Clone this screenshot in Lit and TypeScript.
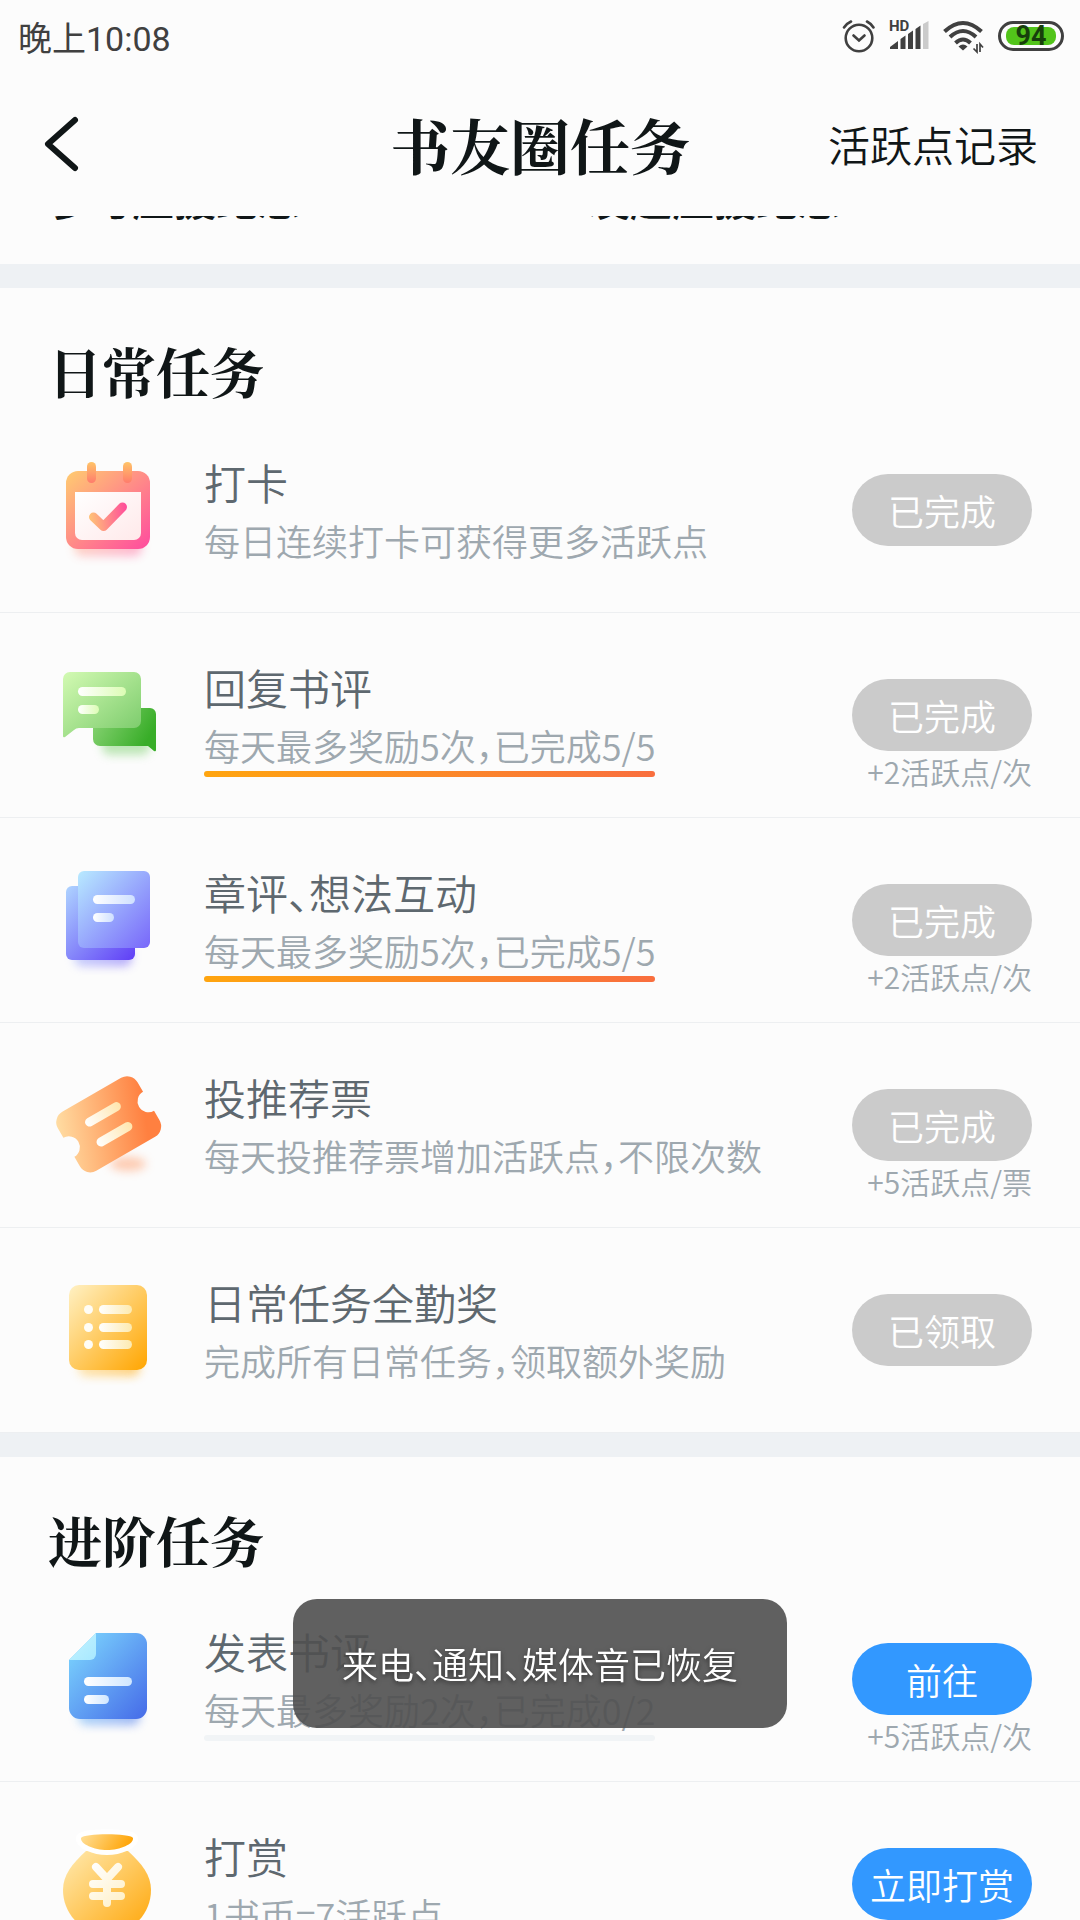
import { LitElement, html, svg, css, nothing } from "lit";
import { customElement, property } from "lit/decorators.js";

type IconName = "calendar" | "chat" | "notes" | "ticket" | "list" | "doc" | "bag";

interface Task {
  icon: IconName;
  title: string;
  desc: string;
  action: string;
  note?: string;
  progress?: number;
  done: boolean;
}

interface Section {
  heading: string;
  tasks: Task[];
}

const SECTIONS: Section[] = [
  {
    heading: "日常任务",
    tasks: [
      { icon: "calendar", title: "打卡", desc: "每日连续打卡可获得更多活跃点", action: "已完成", done: true },
      { icon: "chat", title: "回复书评", desc: "每天最多奖励5次，已完成5/5", action: "已完成", note: "+2活跃点/次", progress: 100, done: true },
      { icon: "notes", title: "章评、想法互动", desc: "每天最多奖励5次，已完成5/5", action: "已完成", note: "+2活跃点/次", progress: 100, done: true },
      { icon: "ticket", title: "投推荐票", desc: "每天投推荐票增加活跃点，不限次数", action: "已完成", note: "+5活跃点/票", done: true },
      { icon: "list", title: "日常任务全勤奖", desc: "完成所有日常任务，领取额外奖励", action: "已领取", done: true },
    ],
  },
  {
    heading: "进阶任务",
    tasks: [
      { icon: "doc", title: "发表书评", desc: "每天最多奖励2次，已完成0/2", action: "前往", note: "+5活跃点/次", progress: 0, done: false },
      { icon: "bag", title: "打赏", desc: "1书币=7活跃点", action: "立即打赏", done: false },
    ],
  },
];

const gradient = (id: string, from: string, to: string, x2 = 1, y2 = 1) => svg`
  <linearGradient id=${id} x1="0" y1="0" x2=${x2} y2=${y2}>
    <stop offset="0" stop-color=${from} />
    <stop offset="1" stop-color=${to} />
  </linearGradient>`;

const softBlur = svg`
  <filter id="blur" x="-50%" y="-100%" width="200%" height="300%">
    <feGaussianBlur stdDeviation="5" />
  </filter>`;

const ICONS = {
  calendar: svg`
    <defs>
      ${softBlur}
      ${gradient("body", "#ffcc70", "#ff4a9f")}
      ${gradient("tab", "#ffc468", "#ff7c6c", 0)}
      ${gradient("paper", "#ffffff", "#ffe9ea")}
      <linearGradient id="tick" gradientUnits="userSpaceOnUse" x1="36" y1="60" x2="72" y2="56">
        <stop offset="0" stop-color="#ffc078" /><stop offset="1" stop-color="#ff4f9a" />
      </linearGradient>
    </defs>
    <rect x="20" y="80" width="68" height="22" rx="8" fill="url(#body)" opacity="0.45" filter="url(#blur)" />
    <rect x="12" y="17" width="84" height="78" rx="12" fill="url(#body)" />
    <path d="M21 38H87V79a7 7 0 0 1-7 7H28a7 7 0 0 1-7-7Z" fill="url(#paper)" />
    <rect x="33" y="8" width="9" height="21" rx="4.5" fill="url(#tab)" />
    <rect x="69" y="8" width="9" height="21" rx="4.5" fill="url(#tab)" />
    <path d="M39.500 63L49.500 72.500L68.500 53" fill="none" stroke="url(#tick)" stroke-width="9" stroke-linecap="round" stroke-linejoin="round" />`,
  chat: svg`
    <defs>
      ${softBlur}
      ${gradient("back", "#8fd67a", "#38ad28", 1, 0.4)}
      ${gradient("front", "#d3fab3", "#77c968")}
      ${gradient("line", "#ffffff", "#dcfcb4", 1, 0)}
    </defs>
    <rect x="48" y="76" width="48" height="20" rx="8" fill="#7ed070" opacity="0.5" filter="url(#blur)" />
    <path d="M39 49H96a6 6 0 0 1 6 6V91q0 2-2 1L94 87H46a7 7 0 0 1-7-7Z" fill="url(#back)" />
    <path d="M9 20a7 7 0 0 1 7-7H80a7 7 0 0 1 7 7V62a7 7 0 0 1-7 7H25q-3 0-5 2L11 78q-2 1-2-1Z" fill="url(#front)" />
    <rect x="24" y="28" width="48" height="9" rx="4.500" fill="url(#line)" />
    <rect x="24" y="46" width="21" height="9" rx="4.500" fill="url(#line)" />`,
  notes: svg`
    <defs>
      ${softBlur}
      ${gradient("back", "#aed4ff", "#5f3df6")}
      ${gradient("front", "#b8eaff", "#7867fa")}
      ${gradient("line", "#ffffff", "#cfe0ff", 1, 0)}
    </defs>
    <rect x="20" y="82" width="58" height="20" rx="8" fill="url(#back)" opacity="0.5" filter="url(#blur)" />
    <rect x="12" y="22" width="69" height="74" rx="6" fill="url(#back)" />
    <rect x="24" y="7" width="72" height="77" rx="6" fill="url(#front)" />
    <rect x="39" y="31" width="42" height="9" rx="4.500" fill="url(#line)" />
    <rect x="39" y="49" width="21" height="9" rx="4.500" fill="url(#line)" />`,
  ticket: svg`
    <defs>
      ${softBlur}
      ${gradient("body", "#ffe0a6", "#ff8040", 1, 0.3)}
      ${gradient("line", "#ffffff", "#ffe6ae", 1, 0)}
    </defs>
    <ellipse cx="74" cy="95" rx="18" ry="7" fill="#ff9a66" opacity="0.5" filter="url(#blur)" />
    <g transform="translate(54.700 55.300) rotate(-30)">
      <path d="M-34-34H34A12 12 0 0 1 46-22V-11A11 11 0 0 0 46 11V22A12 12 0 0 1 34 34H-34A12 12 0 0 1-46 22V11A11 11 0 0 0-46-11V-22A12 12 0 0 1-34-34Z" fill="url(#body)" />
      <rect x="-20" y="-16" width="40" height="9" rx="4.500" fill="url(#line)" />
      <rect x="-20" y="7" width="40" height="9" rx="4.500" fill="url(#line)" />
    </g>`,
  list: svg`
    <defs>
      ${softBlur}
      ${gradient("body", "#fff1c4", "#ffa500")}
      ${gradient("line", "#ffffff", "#fdeab0", 1, 0)}
    </defs>
    <rect x="24" y="80" width="62" height="22" rx="8" fill="url(#body)" opacity="0.6" filter="url(#blur)" />
    <rect x="15" y="11" width="78" height="85" rx="10" fill="url(#body)" />
    ${[31, 49, 66].map(
      (y) => svg`
        <circle cx="34.500" cy=${y + 4.5} r="4.500" fill="#fffdf6" />
        <rect x="45" y=${y} width="33" height="9" rx="4.500" fill="url(#line)" />`
    )}`,
  doc: svg`
    <defs>
      ${softBlur}
      ${gradient("body", "#7fdcff", "#456ae8")}
      ${gradient("fold", "#c4f4ff", "#a8e8ff")}
      ${gradient("line", "#ffffff", "#cfe6ff", 1, 0)}
    </defs>
    <rect x="24" y="80" width="62" height="22" rx="8" fill="url(#body)" opacity="0.55" filter="url(#blur)" />
    <path d="M42 10H82A11 11 0 0 1 93 21V85A11 11 0 0 1 82 96H26A11 11 0 0 1 15 85V37Z" fill="url(#body)" />
    <path d="M42 10V31a6 6 0 0 1-6 6H15Z" fill="url(#fold)" />
    <rect x="30" y="54" width="48" height="9" rx="4.500" fill="url(#line)" />
    <rect x="30" y="72" width="25" height="9" rx="4.500" fill="url(#line)" />`,
  bag: svg`
    <defs>
      ${gradient("body", "#ffeab0", "#ffa506")}
      ${gradient("neck", "#ffe09a", "#ffa60a", 1, 0.2)}
      <linearGradient id="yuan" gradientUnits="userSpaceOnUse" x1="35" y1="40" x2="70" y2="74">
        <stop offset="0" stop-color="#ffffff" /><stop offset="1" stop-color="#fff0c8" />
      </linearGradient>
    </defs>
    <path d="M32 23H74C88 36 97 47 97 62C97 86 78 106 53 106C28 106 9 86 9 62C9 47 18 36 32 23Z" fill="url(#body)" />
    <path d="M27 10C30 5 76 5 79 10C80 16 66 22 53 22C40 22 26 16 27 10Z" fill="url(#neck)" stroke="#fff" stroke-width="10" paint-order="stroke" stroke-linejoin="round" />
    <path d="M42 39L53 51L64 39M53 51V75M39 56H67M39 68H67" fill="none" stroke="url(#yuan)" stroke-width="8" stroke-linecap="round" stroke-linejoin="round" />`,
};

@customElement("task-icon")
export class TaskIcon extends LitElement {
  @property() name: IconName = "calendar";

  static styles = css`
    :host {
      display: block;
    }
    .icon {
      display: block;
      width: 108px;
      height: 108px;
      overflow: visible;
    }
  `;

  render() {
    return html`<svg class="icon" viewBox="0 0 108 108" aria-hidden="true">${ICONS[this.name]}</svg>`;
  }
}

@customElement("status-bar")
export class StatusBar extends LitElement {
  static styles = css`
    :host {
      display: flex;
      align-items: center;
      justify-content: space-between;
      height: 72px;
      padding: 0 16px 0 18px;
      color: #404040;
      font-family: Roboto, "Noto Sans CJK SC", sans-serif;
    }
    .time {
      font-size: 34px;
    }
    .icons {
      display: flex;
      align-items: center;
      gap: 14px;
    }
    .glyph {
      display: block;
      height: 36px;
    }
    .hd {
      font: 700 15px Roboto, sans-serif;
    }
    .battery {
      box-sizing: border-box;
      display: flex;
      width: 66px;
      height: 30px;
      padding: 3px 5px;
      border: 3px solid #404040;
      border-radius: 15px;
    }
    .charge {
      flex: 1;
      border-radius: 8px;
      background: #52c41a;
      color: #173f0c;
      font-size: 27px;
      font-weight: 700;
      line-height: 18px;
      text-align: center;
    }
  `;

  render() {
    return html`
      <span class="time">晚上10:08</span>
      <div class="icons">
        <svg class="glyph" width="33" viewBox="0 0 33 36" fill="none" stroke="#404040" stroke-width="2.600" stroke-linecap="round" aria-label="闹钟">
          <circle cx="17" cy="20" r="13.300" />
          <path d="M11.500 17.500L17 22.500L22.500 17.500M2 9.500Q4.500 5.500 9 3.500M31.500 9.500Q29 5.500 25 3.500" />
        </svg>
        <svg class="glyph" width="40" viewBox="0 0 40 36" fill="#404040" aria-label="信号">
          <text class="hd" x="0" y="13">HD</text>
          <path d="M1 31V29L9 23V31ZM11.500 31V21L16.500 17.500V31ZM19 31V16L24 12.500V31ZM26.500 31V11L31.500 7.500V31Z" />
          <path d="M34 31V6L39.500 3V31Z" fill="#cbcbcb" />
        </svg>
        <svg class="glyph" width="41" viewBox="0 0 41 36" fill="none" stroke="#404040" stroke-width="4" aria-label="无线网络">
          <path d="M1.500 13.500Q20 -3.500 38.500 13.500M7 19Q20 7 33 19M12.500 25Q20 18 27.500 25" />
          <path d="M15.500 28.500Q20 24.500 24.500 28.500L20 32.500Z" fill="#404040" stroke="none" />
          <path d="M34 26V34L30.500 30.500M37 34V26L40 29.500" stroke-width="1.700" />
        </svg>
        <div class="battery"><span class="charge">94</span></div>
      </div>
    `;
  }
}

@customElement("task-row")
export class TaskRow extends LitElement {
  @property({ attribute: false }) task!: Task;

  static styles = css`
    :host {
      box-sizing: border-box;
      display: flex;
      gap: 42px;
      height: 205px;
      padding: 46px 48px 0 54px;
      border-bottom: 1px solid #edeff1;
    }
    .info {
      display: flex;
      flex: 1;
      flex-direction: column;
      align-items: flex-start;
      min-width: 0;
    }
    .title {
      margin: 0;
      padding-bottom: 4px;
      color: #5e686f;
      font-size: 42px;
      font-weight: 350;
      line-height: 56px;
    }
    .desc {
      color: #9ea8af;
      font-size: 36px;
      font-weight: 350;
      line-height: 52px;
      white-space: nowrap;
    }
    .track {
      height: 6px;
      border-radius: 3px;
      background: #f1f4f6;
    }
    .fill {
      height: 6px;
      border-radius: 3px;
      background: linear-gradient(90deg, #ffa50f, #f96e3e);
    }
    .side {
      display: flex;
      flex-direction: column;
      align-items: flex-end;
      padding-top: 20px;
    }
    .action {
      width: 180px;
      height: 72px;
      padding: 0;
      border: 0;
      border-radius: 36px;
      background: #3298ff;
      color: #fff;
      font: inherit;
      font-size: 36px;
      font-weight: 350;
      line-height: 70px;
    }
    .action:disabled {
      background: #cbcbcb;
    }
    .note {
      color: #9ea8af;
      font-size: 30px;
      font-weight: 350;
      line-height: 40px;
      white-space: nowrap;
    }
  `;

  render() {
    const { icon, title, desc, action, note, progress, done } = this.task;
    return html`
      <task-icon .name=${icon}></task-icon>
      <div class="info">
        <h3 class="title">${title}</h3>
        <div>
          <div class="desc">${desc}</div>
          ${progress === undefined
            ? nothing
            : html`<div class="track"><div class="fill" style="width:${progress}%"></div></div>`}
        </div>
      </div>
      <div class="side">
        <button class="action" ?disabled=${done}>${action}</button>
        ${note ? html`<span class="note">${note}</span>` : nothing}
      </div>
    `;
  }
}

@customElement("app-root")
export class AppRoot extends LitElement {
  static styles = css`
    :host {
      display: flex;
      flex-direction: column;
      height: 100vh;
      overflow: hidden;
      background: #fcfcfc;
      color: #101617;
      font-family: "Noto Sans CJK SC", sans-serif;
      font-feature-settings: "halt";
    }
    .header {
      display: grid;
      grid-template-columns: 1fr auto 1fr;
      align-items: center;
      height: 144px;
      padding: 0 42px;
    }
    .back {
      justify-self: start;
      padding: 0;
      border: 0;
      background: none;
    }
    .chevron {
      display: block;
      width: 40px;
      height: 60px;
    }
    .heading,
    .page-title {
      margin: 0;
      font-family: "Noto Serif CJK SC", "Noto Sans CJK SC", serif;
      font-weight: 700;
    }
    .page-title {
      font-size: 60px;
      line-height: 84px;
    }
    .log {
      justify-self: end;
      color: inherit;
      font-size: 42px;
      font-weight: 350;
      line-height: 60px;
      text-decoration: none;
    }
    .content {
      flex: 1;
      min-height: 0;
      overflow: hidden;
    }
    .tabs {
      display: grid;
      grid-template-columns: 1fr 1fr;
      margin-top: -40px;
      padding-bottom: 44px;
    }
    .tab {
      padding-left: 48px;
      font-size: 42px;
      font-weight: 500;
      line-height: 44px;
    }
    .section {
      border-top: 24px solid #eef1f4;
    }
    .heading {
      height: 120px;
      padding-left: 48px;
      font-size: 54px;
      line-height: 166px;
    }
    .toast {
      position: fixed;
      bottom: 192px;
      left: 50%;
      transform: translateX(-50%);
      padding: 38px 49px;
      border-radius: 24px;
      background: rgba(80, 80, 80, 0.91);
      color: #fff;
      font-size: 36px;
      font-weight: 350;
      line-height: 53px;
      text-shadow: 0 2px 5px rgba(0, 0, 0, 0.5);
      white-space: nowrap;
    }
  `;

  render() {
    return html`
      <status-bar></status-bar>
      <header class="header">
        <button class="back" aria-label="返回">
          <svg class="chevron" viewBox="0 0 40 60" fill="none" stroke="#101617" stroke-width="6" stroke-linecap="round" stroke-linejoin="round">
            <path d="M33 6L6 30L33 54" />
          </svg>
        </button>
        <h1 class="page-title">书友圈任务</h1>
        <a class="log" href="#log">活跃点记录</a>
      </header>
      <main class="content">
        <div class="tabs">
          <span class="tab">参与应援纪念</span>
          <span class="tab">发起应援纪念</span>
        </div>
        ${SECTIONS.map(
          (section) => html`
            <section class="section">
              <h2 class="heading">${section.heading}</h2>
              ${section.tasks.map((task) => html`<task-row .task=${task}></task-row>`)}
            </section>
          `
        )}
      </main>
      <div class="toast" role="status">来电、通知、媒体音已恢复</div>
    `;
  }
}
